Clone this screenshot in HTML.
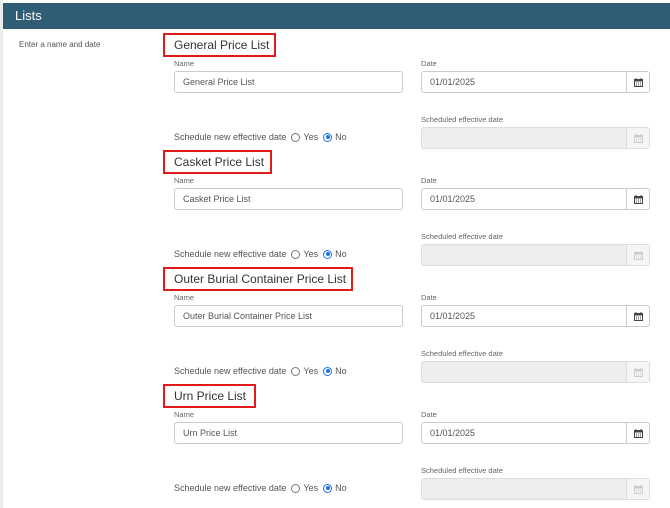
<!DOCTYPE html>
<html><head><style>
*{box-sizing:border-box;margin:0;padding:0}
body{width:670px;height:508px;background:#fff;font-family:"Liberation Sans",sans-serif;position:relative;overflow:hidden;color:#555}
.lb{position:absolute;left:0;top:0;width:3px;height:508px;background:#ececec}
.hd{position:absolute;left:3px;top:3px;width:667px;height:26px;background:#2f5d74;color:#fff;font-size:13px;line-height:26px;padding-left:12px}
.a{position:absolute}
.intro{left:19px;top:40px;font-size:8px;color:#555}
.rb{border:2px solid #e01b1b;height:24px;font-size:12px;color:#333;line-height:20px;padding-left:9px}
.lab{font-size:7.5px;color:#666}
.in{border:1px solid #ccc;border-radius:3px;height:22px;font-size:9px;line-height:20px;padding-left:8px;color:#555;background:#fff}
.dis{background:#eee;border-color:#ddd}
.cal{position:absolute;right:0;top:0;width:23px;height:20px;border-left:1px solid #ccc;display:flex;align-items:center;justify-content:center}
.rad{font-size:9px;color:#555;display:flex;align-items:center}
.r{display:inline-block;width:9px;height:9px;border:1px solid #777;border-radius:50%;margin:0 3px 0 5px;position:relative}
.r.on{border-color:#1a73e8}
.r.on:after{content:"";position:absolute;left:1.5px;top:1.5px;width:4px;height:4px;border-radius:50%;background:#1a73e8}
</style></head><body>
<div class="lb"></div>
<div class="hd">Lists</div>
<div class="a intro">Enter a name and date</div>
<div id="c"></div>
<script>
var t=["General Price List","Casket Price List","Outer Burial Container Price List","Urn Price List"],w=[113,109,190,93],h="";
function cal(c){return '<svg width="9" height="9" viewBox="0 0 9 9"><rect x="0.5" y="1.5" width="8" height="7" fill="none" stroke="'+c+'"/><rect x="0.5" y="1.5" width="8" height="2" fill="'+c+'"/><path d="M2 0v2M7 0v2M2 5h1M4 5h1M6 5h1M2 7h1M4 7h1M6 7h1" stroke="'+c+'"/></svg>'}
for(var i=0;i<4;i++){var o=117*i;
h+='<div class="a rb" style="left:163px;top:'+(33+o)+'px;width:'+w[i]+'px">'+t[i]+'</div>';
h+='<div class="a lab" style="left:174px;top:'+(59+o)+'px">Name</div>';
h+='<div class="a in" style="left:174px;top:'+(71+o)+'px;width:229px">'+t[i]+'</div>';
h+='<div class="a lab" style="left:421px;top:'+(59+o)+'px">Date</div>';
h+='<div class="a in" style="left:421px;top:'+(71+o)+'px;width:229px">01/01/2025<div class="cal">'+cal("#444")+'</div></div>';
h+='<div class="a lab" style="left:421px;top:'+(115+o)+'px">Scheduled effective date</div>';
h+='<div class="a in dis" style="left:421px;top:'+(127+o)+'px;width:229px"><div class="cal" style="border-color:#ddd;background:#f5f5f5">'+cal("#ccc")+'</div></div>';
h+='<div class="a rad" style="left:174px;top:'+(132+o)+'px">Schedule new effective date<span class="r"></span>Yes<span class="r on"></span>No</div>';}
document.getElementById("c").innerHTML=h;
</script>
</body></html>
